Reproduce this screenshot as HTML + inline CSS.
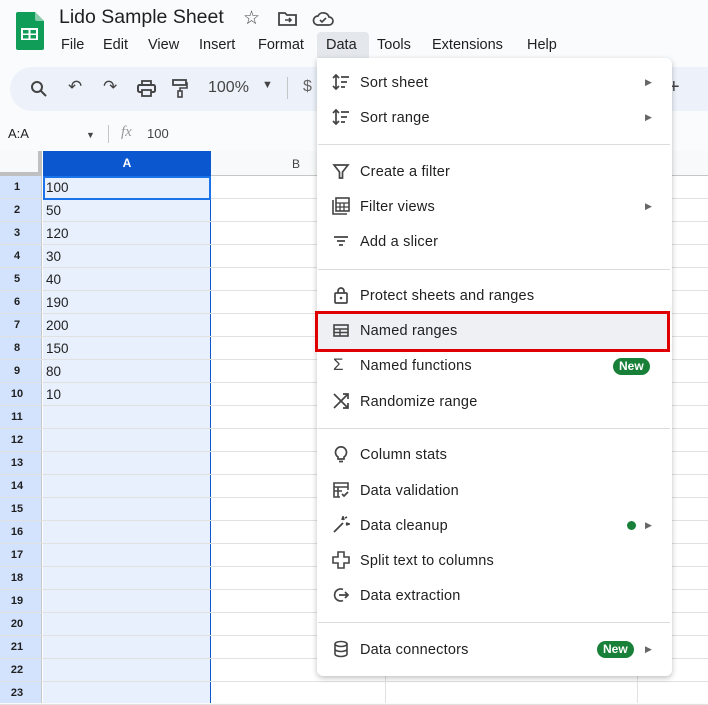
<!DOCTYPE html><html><head><style>
*{margin:0;padding:0;box-sizing:border-box}
body{width:708px;height:703px;overflow:hidden;background:#f9fbfd;font-family:"Liberation Sans",Arial,sans-serif;position:relative;color:#1f1f1f}
.abs{position:absolute}
.mi{position:absolute;left:360px;font-size:14.5px;color:#1f1f1f;letter-spacing:.2px;margin-top:1px}
.ic{position:absolute;left:332px;width:18px;height:18px}
.arr{position:absolute;left:645px;font-size:9px;color:#666}
.sep{position:absolute;left:318px;width:352px;height:1px;background:#dadce0}
.new{position:absolute;background:#188038;color:#fff;font-weight:bold;font-size:12px;border-radius:9px;padding:1px 6px;height:17px;line-height:15px}
</style></head><body>
<svg class="abs" style="left:16px;top:12px" width="28" height="38" viewBox="0 0 28 38"><path d="M2 0h17l9 9v27a2 2 0 0 1-2 2H2a2 2 0 0 1-2-2V2a2 2 0 0 1 2-2z" fill="#0f9d58"/><path d="M19 0l9 9h-7a2 2 0 0 1-2-2z" fill="#87ceac"/><rect x="5" y="16" width="17" height="12" fill="#fff"/><rect x="7" y="18" width="5.5" height="3.5" fill="#0f9d58"/><rect x="14.5" y="18" width="5.5" height="3.5" fill="#0f9d58"/><rect x="7" y="23" width="5.5" height="3.5" fill="#0f9d58"/><rect x="14.5" y="23" width="5.5" height="3.5" fill="#0f9d58"/></svg>
<div class="abs" style="left:59px;top:6px;font-size:19.5px;color:#1f1f1f">Lido Sample Sheet</div>
<div class="abs" style="left:243px;top:7px;font-size:19px;color:#444">☆</div>
<svg class="abs" style="left:278px;top:11px" width="20" height="16" viewBox="0 0 20 16"><path d="M1 2h6l2 2h9v10H1z" fill="none" stroke="#444" stroke-width="1.8"/><path d="M7 9h6M11 7l2 2-2 2" stroke="#444" stroke-width="1.6" fill="none"/></svg>
<svg class="abs" style="left:312px;top:11px" width="22" height="16" viewBox="0 0 22 16"><path d="M6 14a4.5 4.5 0 0 1 0-9 6 6 0 0 1 11 1 4 4 0 0 1 0 8z" fill="none" stroke="#444" stroke-width="1.7"/><path d="M8 9l2 2 4-4" stroke="#444" stroke-width="1.6" fill="none"/></svg>
<div class="abs" style="top:37px;left:61px;font-size:14.5px;color:#1f1f1f">
<span style="position:absolute;left:0">File</span><span style="position:absolute;left:42px">Edit</span><span style="position:absolute;left:87px">View</span><span style="position:absolute;left:138px">Insert</span><span style="position:absolute;left:197px">Format</span><span style="position:absolute;left:316px">Tools</span><span style="position:absolute;left:371px">Extensions</span><span style="position:absolute;left:466px">Help</span></div>
<div class="abs" style="left:317px;top:32px;width:52px;height:27px;background:#e4e7ec;border-radius:4px 4px 0 0"></div>
<div class="abs" style="left:326px;top:37px;font-size:14.5px">Data</div>
<div class="abs" style="left:10px;top:67px;width:720px;height:44px;background:#edf2fa;border-radius:22px"></div>
<div class="abs" style="left:30px;top:77px;font-size:17px;color:#444">
<svg class="abs" style="left:0;top:3px" width="18" height="18" viewBox="0 0 18 18"><circle cx="7" cy="7" r="5" fill="none" stroke="#444" stroke-width="2"/><path d="M11 11l5 5" stroke="#444" stroke-width="2"/></svg>
<span class="abs" style="left:38px">↶</span><span class="abs" style="left:73px">↷</span>
<svg class="abs" style="left:107px;top:3px" width="19" height="17" viewBox="0 0 19 17"><rect x="1" y="5" width="17" height="7" rx="1.5" fill="none" stroke="#444" stroke-width="2"/><rect x="5" y="1" width="9" height="4" fill="none" stroke="#444" stroke-width="1.8"/><rect x="5" y="10" width="9" height="6" fill="#edf2fa" stroke="#444" stroke-width="1.8"/></svg>
<svg class="abs" style="left:142px;top:2px" width="16" height="19" viewBox="0 0 16 19"><rect x="1" y="1" width="13" height="5" fill="none" stroke="#444" stroke-width="1.8"/><path d="M14 4h1v5H8v3" fill="none" stroke="#444" stroke-width="1.6"/><rect x="6" y="12" width="4" height="6" fill="none" stroke="#444" stroke-width="1.6"/></svg>
<span class="abs" style="left:178px;top:2px;font-size:16px">100%</span><span class="abs" style="left:232px;top:2px;font-size:11px">▼</span>
<div class="abs" style="left:257px;top:0;width:1px;height:22px;background:#c4c7c5"></div>
<span class="abs" style="left:273px;top:1px;font-size:16px;color:#666">$</span>
<span class="abs" style="left:638px;top:-1px;font-size:20px">+</span>
</div>
<div class="abs" style="left:8px;top:126px;font-size:13px">A:A</div>
<div class="abs" style="left:86px;top:130px;font-size:9px;color:#444">▼</div>
<div class="abs" style="left:108px;top:125px;width:1px;height:18px;background:#c4c7c5"></div>
<div class="abs" style="left:121px;top:124px;font-size:15px;font-style:italic;color:#999;font-family:'Liberation Serif',serif">fx</div>
<div class="abs" style="left:147px;top:126px;font-size:13px;color:#444">100</div>
<div class="abs" style="left:0;top:151px;width:708px;height:552px;background:#fff"></div>
<div class="abs" style="left:0;top:151px;width:42px;height:25px;background:#f8f9fa;border-right:4px solid #c0c0c0;border-bottom:4px solid #c0c0c0"></div>
<div class="abs" style="left:43px;top:151px;width:168px;height:25px;background:#0b57d0;color:#fff;font-weight:bold;font-size:12px;text-align:center;line-height:25px">A</div>
<div class="abs" style="left:211px;top:151px;width:497px;height:25px;background:#f8f9fa;border-bottom:1px solid #c4c7c5"></div>
<div class="abs" style="left:292px;top:157px;font-size:12px;color:#444">B</div>
<div class="abs" style="left:385px;top:151px;width:1px;height:552px;background:#e1e1e1"></div>
<div class="abs" style="left:637px;top:151px;width:1px;height:552px;background:#e1e1e1"></div>
<div class="abs" style="left:0;top:176px;width:42px;height:527px;background:#d3e3fd;border-right:1px solid #c4c7c5"></div>
<div class="abs" style="left:43px;top:176px;width:168px;height:527px;background:#e8f0fe;border-right:1px solid #0b57d0"></div>
<div id="rows"></div>
<div class="abs" style="left:43px;top:176px;width:168px;height:24px;border:2px solid #1a73e8"></div>
<script>
var v=[100,50,120,30,40,190,200,150,80,10],h='';
for(var i=0;i<23;i++){var t=176+i*23;
h+='<div class="abs" style="left:0;top:'+(t+22)+'px;width:708px;height:1px;background:#e1e1e1"></div>';
h+='<div class="abs" style="left:0;top:'+t+'px;width:34px;text-align:center;font-size:11px;font-weight:bold;color:#1f1f1f;line-height:23px">'+(i+1)+'</div>';
if(i<10)h+='<div class="abs" style="left:46px;top:'+t+'px;font-size:13.5px;line-height:23px">'+v[i]+'</div>';}
document.getElementById('rows').innerHTML=h;
</script>
<div class="abs" style="left:317px;top:58px;width:355px;height:618px;background:#fff;border-radius:0 6px 6px 6px;box-shadow:0 2px 6px rgba(0,0,0,.25)"></div>
<div class="abs" style="left:318px;top:313px;width:351px;height:37px;background:#eef0f3"></div>
<div class="abs" style="left:315px;top:311px;width:355px;height:41px;border:3px solid #e00000"></div>
<div class="sep" style="top:144px"></div><div class="sep" style="top:269px"></div><div class="sep" style="top:428px"></div><div class="sep" style="top:622px"></div>
<svg class="ic" style="top:73px" viewBox="0 0 18 18"><path d="M4 2v14M1 5l3-3 3 3M1 13l3 3 3-3M9 4h8M9 9h6M9 14h4" stroke="#444" stroke-width="1.7" fill="none"/></svg>
<svg class="ic" style="top:108px" viewBox="0 0 18 18"><path d="M4 2v14M1 5l3-3 3 3M1 13l3 3 3-3M9 4h8M9 9h6M9 14h4" stroke="#444" stroke-width="1.7" fill="none"/></svg>
<svg class="ic" style="top:162px" viewBox="0 0 18 18"><path d="M2 3h14l-5.5 7v6h-3v-6z" stroke="#444" stroke-width="1.7" fill="none"/></svg>
<svg class="ic" style="top:197px" viewBox="0 0 18 18"><path d="M1 3v14h14" stroke="#444" stroke-width="1.6" fill="none"/><rect x="4" y="1" width="13" height="13" stroke="#444" stroke-width="1.6" fill="none"/><path d="M4 6h13M8 6v8M12 6v8M4 10h13" stroke="#444" stroke-width="1.3"/></svg>
<svg class="ic" style="top:232px" viewBox="0 0 18 18"><path d="M2 5h14M5 9h8M7 13h4" stroke="#444" stroke-width="1.8"/></svg>
<svg class="ic" style="top:286px" viewBox="0 0 18 18"><rect x="3" y="7" width="12" height="10" rx="1" stroke="#444" stroke-width="1.7" fill="none"/><path d="M6 7V5a3 3 0 0 1 6 0v2" stroke="#444" stroke-width="1.7" fill="none"/><circle cx="9" cy="12" r="1.3" fill="#444"/></svg>
<svg class="ic" style="top:321px" viewBox="0 0 18 18"><rect x="2" y="4" width="14" height="11" stroke="#444" stroke-width="1.6" fill="none"/><path d="M2 8h14M2 11.5h14M8 8v7" stroke="#444" stroke-width="1.4"/></svg>
<div class="ic" style="top:355px;font-size:17px;color:#444;left:333px">Σ</div>
<svg class="ic" style="top:392px" viewBox="0 0 18 18"><path d="M2 2l14 14M11 2h5v5M16 2L2 16M11 16h5v-5" stroke="#444" stroke-width="1.7" fill="none"/></svg>
<svg class="ic" style="top:445px" viewBox="0 0 18 18"><path d="M6 12a5.5 5.5 0 1 1 6 0v2H6z M7 16.5h4" stroke="#444" stroke-width="1.7" fill="none"/></svg>
<svg class="ic" style="top:481px" viewBox="0 0 18 18"><path d="M8 16H2V2h14v7M2 6h14M2 10h8M6 6v10" stroke="#444" stroke-width="1.6" fill="none"/><path d="M10 13l2 2 4-4" stroke="#444" stroke-width="1.7" fill="none"/></svg>
<svg class="ic" style="top:516px" viewBox="0 0 18 18"><path d="M2 16L11 7M10 4l1-3 1 3M14 7l3 1-3 1M13 2l2-1" stroke="#444" stroke-width="1.8" fill="none"/></svg>
<svg class="ic" style="top:551px" viewBox="0 0 18 18"><path d="M6 1h6v5h5v6h-5v5H6v-5H1V6h5z" stroke="#444" stroke-width="1.6" fill="none"/></svg>
<svg class="ic" style="top:586px" viewBox="0 0 18 18"><path d="M11 3.5A6 6 0 1 0 11 14.5" stroke="#444" stroke-width="1.7" fill="none"/><path d="M7 9h9M13 6l3 3-3 3" stroke="#444" stroke-width="1.7" fill="none"/></svg>
<svg class="ic" style="top:640px" viewBox="0 0 18 18"><ellipse cx="9" cy="4" rx="6" ry="2.5" stroke="#444" stroke-width="1.6" fill="none"/><path d="M3 4v10c0 1.4 2.7 2.5 6 2.5s6-1.1 6-2.5V4M3 9c0 1.4 2.7 2.5 6 2.5S15 10.4 15 9" stroke="#444" stroke-width="1.6" fill="none"/></svg>
<div class="mi" style="top:74px">Sort sheet</div><div class="arr" style="top:77px">▶</div>
<div class="mi" style="top:109px">Sort range</div><div class="arr" style="top:112px">▶</div>
<div class="mi" style="top:163px">Create a filter</div>
<div class="mi" style="top:198px">Filter views</div><div class="arr" style="top:201px">▶</div>
<div class="mi" style="top:233px">Add a slicer</div>
<div class="mi" style="top:287px">Protect sheets and ranges</div>
<div class="mi" style="top:322px">Named ranges</div>
<div class="mi" style="top:357px">Named functions</div><div class="new" style="left:613px;top:358px">New</div>
<div class="mi" style="top:393px">Randomize range</div>
<div class="mi" style="top:446px">Column stats</div>
<div class="mi" style="top:482px">Data validation</div>
<div class="mi" style="top:517px">Data cleanup</div><div class="abs" style="left:627px;top:521px;width:9px;height:9px;border-radius:50%;background:#188038"></div><div class="arr" style="top:520px">▶</div>
<div class="mi" style="top:552px">Split text to columns</div>
<div class="mi" style="top:587px">Data extraction</div>
<div class="mi" style="top:641px">Data connectors</div><div class="new" style="left:597px;top:641px">New</div><div class="arr" style="top:644px">▶</div>
</body></html>
